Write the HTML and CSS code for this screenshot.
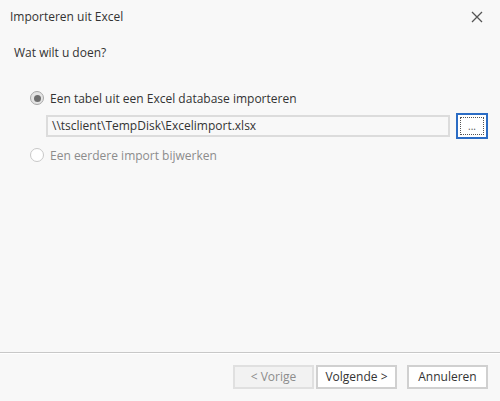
FILE: index.html
```html
<!DOCTYPE html>
<html>
<head>
<meta charset="utf-8">
<link rel="stylesheet" href="styles.css">
</head>
<body>
<div class="dialog">
  <div class="titlebar">
    <span class="title">Importeren uit Excel</span>
    <svg class="close" width="12" height="12" viewBox="0 0 12 12"><path d="M1 1L11 11M11 1L1 11" stroke="#555" stroke-width="1.3" fill="none"/></svg>
  </div>
  <div class="content">
    <div class="question">Wat wilt u doen?</div>
    <div class="options">
      <div class="option">
        <span class="radio checked"><span class="dot"></span></span>
        <span class="label">Een tabel uit een Excel database importeren</span>
      </div>
      <div class="filerow">
        <div class="textbox">\\tsclient\TempDisk\Excelimport.xlsx</div>
        <div class="browse"><span class="focus">...</span></div>
      </div>
      <div class="option disabled">
        <span class="radio"></span>
        <span class="label">Een eerdere import bijwerken</span>
      </div>
    </div>
  </div>
  <div class="footer">
    <div class="btn disabled">&lt; Vorige</div>
    <div class="btn next">Volgende &gt;</div>
    <div class="btn cancel">Annuleren</div>
  </div>
</div>
</body>
</html>
```
FILE: styles.css
```css
html, body {
  margin: 0;
  padding: 0;
  background: #f8f8f8;
}
body {
  font-family: "Open Sans", "Noto Sans", sans-serif;
  font-size: 12px;
  color: #333;
}
.dialog {
  width: 500px;
  height: 401px;
  display: flex;
  flex-direction: column;
}
.titlebar {
  height: 33px;
  display: flex;
  align-items: center;
  justify-content: space-between;
  padding: 0 17px 0 10px;
}
.title {
  font-size: 12px;
  color: #333;
}
.close {
  display: block;
}
.content {
  flex: 1;
  padding: 11px 0 0 14px;
}
.question {
  height: 18px;
  line-height: 18px;
}
.options {
  padding: 26px 10px 0 16px;
}
.option {
  display: flex;
  align-items: center;
  height: 20px;
}
.radio {
  width: 12px;
  height: 12px;
  border: 1px solid #c8c8c8;
  border-radius: 50%;
  background: #fff;
  display: flex;
  align-items: center;
  justify-content: center;
  margin-right: 6px;
}
.radio.checked {
  border-color: #a8a8a8;
  background: #e4e4e4;
}
.dot {
  width: 7px;
  height: 7px;
  border-radius: 50%;
  background: #6e6e6e;
}
.option.disabled .label {
  color: #8c8c8c;
}
.filerow {
  display: flex;
  align-items: center;
  gap: 6px;
  margin: 5px 0 6px 16px;
}
.textbox {
  width: 396px;
  height: 18px;
  border: 2px solid #dcdcdc;
  background: #f8f8f8;
  padding-left: 4px;
  line-height: 18px;
}
.browse {
  width: 28px;
  height: 22px;
  border: 2px solid #2b6cc4;
  background: #fff;
  display: flex;
  align-items: center;
  justify-content: center;
}
.focus {
  width: 24px;
  height: 18px;
  border: 1px dotted #555;
  box-sizing: border-box;
  display: flex;
  align-items: center;
  justify-content: center;
  font-size: 10px;
  color: #555;
}
.footer {
  height: 48px;
  border-top: 1px solid #c8c8c8;
  box-shadow: inset 0 1px 0 #fff;
  display: flex;
  align-items: center;
  justify-content: flex-end;
  padding-right: 12px;
}
.btn {
  width: 77px;
  height: 20px;
  border: 2px solid #d0d0d0;
  background: #fff;
  text-align: center;
  line-height: 20px;
  color: #333;
}
.btn.disabled {
  background: #f2f2f2;
  border-color: #e0e0e0;
  color: #8c8c8c;
}
.btn.next {
  margin-left: 2px;
}
.btn.cancel {
  margin-left: 10px;
}
```
